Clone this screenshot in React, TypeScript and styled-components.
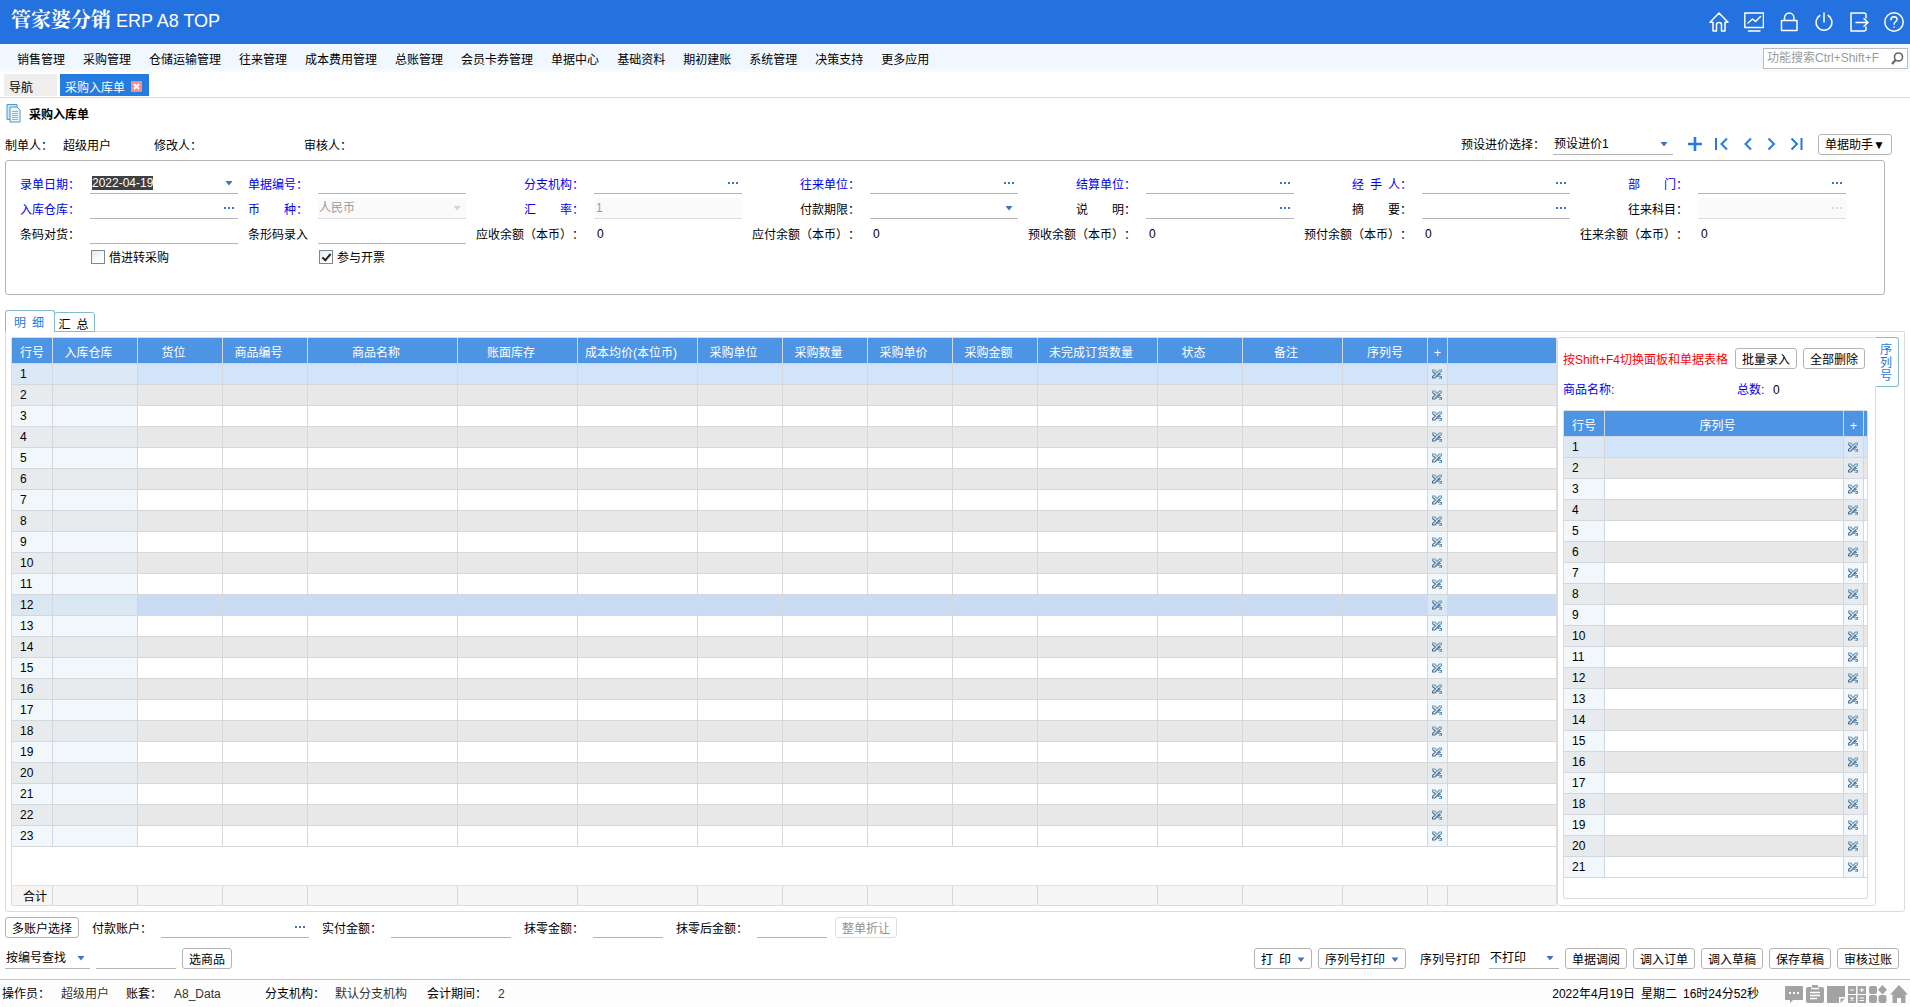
import React, { useEffect, useRef } from "react";
import styled, { createGlobalStyle, css } from "styled-components";

const GlobalStyle = createGlobalStyle`
  *, *::before, *::after { box-sizing: border-box; }
  body { margin: 0; background: #fff; text-spacing-trim: space-all; }
  body, button, input, select, table {
    font-family: "Liberation Sans", Arial, "Noto Sans CJK SC", sans-serif;
    font-size: 12px;
    line-height: 16px;
    color: #000;
  }
  button { cursor: pointer; }
  ::selection { background: #404040; color: #fff; }
`;

const Page = styled.div`
  min-height: 100vh;
  min-width: 1680px;
  display: flex;
  flex-direction: column;
`;

/* ---------- title bar and menu ---------- */

const TitleBar = styled.header`
  height: 44px;
  padding: 0 6px 0 11px;
  display: flex;
  align-items: center;
  justify-content: space-between;
  background: #2472e0;
  color: #fff;
`;

const Brand = styled.h1`
  margin: 0;
  padding-bottom: 4px;
  font-size: 18px;
  line-height: 28px;
  font-weight: 400;
`;

const BrandName = styled.span`
  font-family: "Noto Serif CJK SC", "Noto Sans CJK SC", sans-serif;
  font-size: 20px;
  font-weight: 700;
`;

const TitleActions = styled.div`
  display: flex;
  gap: 15px;
`;

const IconButton = styled.button<{ $size?: number }>`
  width: ${(p) => p.$size ?? 20}px;
  height: ${(p) => p.$size ?? 20}px;
  padding: 0;
  border: 0;
  background: none;
  display: flex;
  align-items: center;
  justify-content: center;
`;

const MenuBar = styled.nav`
  height: 28px;
  padding: 0 2px 0 17px;
  display: flex;
  justify-content: space-between;
  background: #f0f7ff;
  border-bottom: 3px solid #fafafa;
`;

const MenuItems = styled.div`
  display: flex;
  align-items: center;
  gap: 18px;
  padding-top: 6px;
`;

const MenuLink = styled.a`
  color: #000;
  text-decoration: none;
`;

const SearchBox = styled.label`
  width: 145px;
  height: 21px;
  margin-top: 4px;
  padding: 0 3px;
  display: flex;
  align-items: center;
  background: #fff;
  border: 1px solid #b9bcc0;
`;

const SearchInput = styled.input`
  flex: 1;
  min-width: 0;
  padding: 0 0 2px;
  border: 0;
  outline: 0;
  background: none;
  &::placeholder { color: #9b9b9b; opacity: 1; }
`;

/* ---------- window tabs ---------- */

const WindowTabs = styled.div`
  height: 26px;
  padding: 2px 0 1px 4px;
  display: flex;
  gap: 3px;
  border-bottom: 1px solid #dcdcdc;
`;

const WindowTab = styled.button<{ $active?: boolean }>`
  min-width: 53px;
  padding: 6px 7px 0 5px;
  display: flex;
  align-items: center;
  gap: 6px;
  border: 0;
  background: ${(p) => (p.$active ? "#247be0" : "#eeeeee")};
  color: ${(p) => (p.$active ? "#fff" : "#000")};
`;

const CloseMark = styled.svg`
  margin-bottom: 4px;
`;

const DocTitle = styled.div`
  height: 30px;
  padding-left: 6px;
  display: flex;
  align-items: center;
  gap: 8px;
`;

const DocHeading = styled.h2`
  margin: 0;
  padding-top: 4px;
  font-size: 12px;
  font-weight: 700;
`;

const InfoRow = styled.div`
  height: 32px;
  padding: 0 18px 0 5px;
  display: flex;
  align-items: center;
  justify-content: space-between;
`;

const InfoList = styled.div`
  display: flex;
  padding-top: 4px;
`;

const InfoLabel = styled.span<{ $width: number }>`
  width: ${(p) => p.$width}px;
`;

const InfoTools = styled.div`
  display: flex;
  align-items: center;
  gap: 8px;
`;

const NavButtons = styled.div`
  display: flex;
  align-items: center;
  gap: 5px;
  margin: 0 5px 0 4px;
`;

/* ---------- shared controls ---------- */

const PushButton = styled.button`
  height: 21px;
  padding: 2px 6px 0;
  display: flex;
  align-items: center;
  gap: 6px;
  flex: none;
  white-space: nowrap;
  border: 1px solid #b4b4b4;
  border-radius: 3px;
  background: #fff;
  &:disabled { color: #8f8f8f; border-color: #dddddd; }
`;

const FieldLabel = styled.label<{ $link?: boolean; $align?: string }>`
  padding-top: 2px;
  color: ${(p) => (p.$link ? "#0000f0" : "#000")};
  text-align: ${(p) => p.$align ?? "left"};
  white-space: nowrap;
  line-height: 20px;
`;

const FieldBox = styled.div<{ $width?: number; $disabled?: boolean }>`
  ${(p) => p.$width && css`width: ${p.$width}px;`}
  height: 21px;
  min-width: 0;
  padding-right: 3px;
  display: flex;
  align-items: center;
  border-bottom: 1px solid ${(p) => (p.$disabled ? "#dddddd" : "#b4b4b4")};
  background: ${(p) => (p.$disabled ? "#fafafa" : "#fff")};
`;

const controlStyle = css`
  flex: 1;
  width: 100%;
  min-width: 0;
  height: 18px;
  padding: 0 0 0 2px;
  border: 0;
  outline: 0;
  background: none;
  &:disabled { color: #9b9b9b; opacity: 1; }
`;

const TextInput = styled.input`${controlStyle}`;

const SelectInput = styled.select`
  ${controlStyle}
  appearance: none;
  padding-left: 1px;
  padding-right: 16px;
  margin-right: -14px;
`;

const Drop = styled.svg`
  flex: none;
  pointer-events: none;
`;

const Arrow = ({ faded = false }: { faded?: boolean }) => (
  <Drop width="14" height="8" viewBox="0 0 14 8" aria-hidden="true">
    <path d="M4.5 2h7L8 6.5z" fill={faded ? "#c9d6e6" : "#3f74bd"} />
  </Drop>
);

const ButtonArrow = () => (
  <Drop width="8" height="6" viewBox="0 0 8 6" aria-hidden="true">
    <path d="M0.5 0.5h7L4 5z" fill="#3f74bd" />
  </Drop>
);

const Dots = ({ faded = false }: { faded?: boolean }) => (
  <svg width="11" height="2" viewBox="0 0 11 2" aria-hidden="true">
    <path d="M0 0h2v2H0zM4 0h2v2H4zM8 0h2v2H8z" fill={faded ? "#d3deea" : "#3f74bd"} />
  </svg>
);

type FieldKind = "text" | "lookup" | "select";

const Field = ({
  id, kind = "text", value = "", width, disabled, label,
}: { id: string; kind?: FieldKind; value?: string; width?: number; disabled?: boolean; label?: string }) => (
  <FieldBox $width={width} $disabled={disabled}>
    {kind === "select" ? (
      <>
        <SelectInput id={id} disabled={disabled} aria-label={label}>
          <option>{value}</option>
        </SelectInput>
        <Arrow faded={disabled} />
      </>
    ) : (
      <TextInput id={id} defaultValue={value} disabled={disabled} aria-label={label} />
    )}
    {kind === "lookup" && (
      <IconButton type="button" $size={12} disabled={disabled} aria-label="选择">
        <Dots faded={disabled} />
      </IconButton>
    )}
  </FieldBox>
);

const DateField = ({ id, value }: { id: string; value: string }) => {
  const ref = useRef<HTMLInputElement>(null);
  useEffect(() => {
    ref.current?.focus();
    ref.current?.select();
  }, []);
  return (
    <FieldBox>
      <TextInput id={id} ref={ref} defaultValue={value} />
      <IconButton type="button" $size={14} aria-label="打开日历">
        <Arrow />
      </IconButton>
    </FieldBox>
  );
};

/* ---------- document form ---------- */

const FormPanel = styled.form`
  margin: 0 25px 0 5px;
  padding: 12px 38px 25px 14px;
  min-height: 135px;
  display: grid;
  grid-template-columns: 60px 1fr 60px 1fr repeat(5, 108px 1fr);
  grid-auto-rows: 21px;
  column-gap: 10px;
  row-gap: 4px;
  border: 1px solid #b4b4b4;
  border-radius: 3px;
`;

const Amount = styled.output`
  padding-left: 3px;
  line-height: 22px;
`;

const CheckLabel = styled.label<{ $column: number }>`
  grid-column: ${(p) => p.$column};
  height: 20px;
  display: flex;
  align-items: center;
  gap: 4px;
  white-space: nowrap;
`;

const CheckBox = styled.input`
  appearance: none;
  width: 14px;
  height: 14px;
  margin: 0 0 2px 1px;
  border: 1px solid #7c8794;
  background: linear-gradient(135deg, #dfe8f2, #fff 70%);
  display: grid;
  place-items: center;
  &:checked::after {
    content: "";
    width: 5px;
    height: 9px;
    margin-bottom: 2px;
    border: solid #222;
    border-width: 0 2px 2px 0;
    transform: rotate(40deg);
  }
`;

/* ---------- detail area ---------- */

const DetailTabs = styled.div`
  margin: 15px 0 -1px 5px;
  height: 22px;
  display: flex;
  align-items: flex-end;
  position: relative;
`;

const DetailTab = styled.button<{ $active?: boolean }>`
  width: ${(p) => (p.$active ? 50 : 41)}px;
  height: ${(p) => (p.$active ? 22 : 20)}px;
  margin-right: -1px;
  padding: 4px 2px 0 0;
  border: 1px solid #86bcd3;
  border-bottom-color: ${(p) => (p.$active ? "#fff" : "#86bcd3")};
  border-radius: 3px 3px 0 0;
  background: #fff;
  color: ${(p) => (p.$active ? "#1e78dc" : "#000")};
`;

const DetailFrame = styled.main`
  flex: 1;
  margin: 0 5px;
  padding: 5px;
  display: flex;
  border: 1px solid #dcdcdc;
  border-radius: 0 0 3px 3px;
`;

const GridBox = styled.section`
  flex: 1;
  min-width: 0;
  display: flex;
  flex-direction: column;
  justify-content: space-between;
  border: 1px solid #dcdcdc;
  border-radius: 2px;
`;

const SidePanel = styled.section`
  width: 319px;
  padding: 0 7px 6px 5px;
  display: flex;
  flex-direction: column;
  border: 1px solid #dcdcdc;
  border-radius: 3px;
`;

const SideActions = styled.div`
  height: 21px;
  margin: 10px 3px 0 0;
  display: flex;
  align-items: center;
  gap: 6px;
`;

const Hint = styled.span`
  flex: 1;
  padding-top: 2px;
  white-space: nowrap;
  color: #f00;
`;

const SideSummary = styled.div`
  height: 41px;
  padding-top: 1px;
  display: grid;
  grid-template-columns: 174px 36px 1fr;
  align-items: center;
  color: #0000f0;
`;

const Count = styled.output`
  color: #000;
`;

const SideTab = styled.button`
  width: 24px;
  height: 50px;
  margin-left: -1px;
  padding: 3px 0 0;
  border: 1px solid #86bcd3;
  border-left-color: #fff;
  border-radius: 0 3px 3px 0;
  background: #fff;
  color: #1e78dc;
  line-height: 13px;
`;

const SideTabText = styled.span`
  display: block;
  width: 12px;
  margin-left: 4px;
`;

const Table = styled.table`
  width: 100%;
  table-layout: fixed;
  border-collapse: separate;
  border-spacing: 0;
`;

const HeadCell = styled.th<{ $sortable?: boolean }>`
  height: 26px;
  padding: 4px ${(p) => (p.$sortable ? 13 : 0)}px 0 0;
  font-weight: 400;
  white-space: nowrap;
  color: #fff;
  background: #4d95e4;
  border-right: 1px solid #d4d8dc;
  border-bottom: 1px solid #d4d8dc;
  &:last-child { border-right: 0; }
`;

type Tone = "current" | "hover" | "even" | "odd";
const cellColor: Record<Tone, string> = { current: "#d1e4fa", hover: "#c9dcf4", even: "#e8e8e8", odd: "#ffffff" };
const fixedColor: Record<Tone, string> = { current: "#dde8f6", hover: "#d9e7f3", even: "#e7ebee", odd: "#f2f7fb" };

const Row = styled.tr<{ $tone: Tone }>`
  height: 21px;
  background: ${(p) => cellColor[p.$tone]};
`;

const Cell = styled.td<{ $fixed?: Tone }>`
  height: 21px;
  padding: 0;
  border-right: 1px solid #d4d8dc;
  border-bottom: 1px solid #d4d8dc;
  ${(p) => p.$fixed && css`background: ${fixedColor[p.$fixed]};`}
  &:last-child { border-right: 0; }
`;

const NumberCell = styled(Cell)`
  padding-left: 8px;
`;

const IconCell = styled(Cell)`
  padding-right: 1px;
  line-height: 0;
  text-align: center;
`;

const RowAction = styled(IconButton)`
  display: inline-flex;
  vertical-align: top;
`;

const FootCell = styled.td`
  height: 20px;
  padding: 2px 5px 0 0;
  text-align: right;
  background: #f6f5f4;
  border-top: 1px solid #d8e6f3;
  border-right: 1px solid #d4d8dc;
  &:last-child { border-right: 0; }
`;

const SideGrid = styled.div`
  flex: 1;
  border: 1px solid #dcdcdc;
  border-radius: 2px;
`;

const ClearIcon = () => (
  <svg width="10" height="10" viewBox="0 0 10 10" fill="none" aria-hidden="true">
    <path d="M0.5 2.5V1H3l2 2.5L7.5 1h2v1.5l-3 2.5" stroke="#6f9cbc" strokeWidth="1.2" />
    <path d="M0.5 2.5l3 2.5-3 2.5V9H3l4.5-5" stroke="#44709a" strokeWidth="1.2" />
    <path d="M5.5 7.5H7v-2h2M7 9.3h2.5V7.5H8" stroke="#5c88ab" strokeWidth="1.1" />
  </svg>
);

type Column = { name: string; width?: number; sortable?: boolean };

const columns: Column[] = [
  { name: "行号", width: 41 },
  { name: "入库仓库", width: 85, sortable: true },
  { name: "货位", width: 85, sortable: true },
  { name: "商品编号", width: 85, sortable: true },
  { name: "商品名称", width: 150, sortable: true },
  { name: "账面库存", width: 120, sortable: true },
  { name: "成本均价(本位币)", width: 120, sortable: true },
  { name: "采购单位", width: 85, sortable: true },
  { name: "采购数量", width: 85, sortable: true },
  { name: "采购单价", width: 85, sortable: true },
  { name: "采购金额", width: 85, sortable: true },
  { name: "未完成订货数量", width: 120, sortable: true },
  { name: "状态", width: 85, sortable: true },
  { name: "备注", width: 100, sortable: true },
  { name: "序列号", width: 85 },
  { name: "+", width: 20 },
  { name: "" },
];

const sideColumns: Column[] = [
  { name: "行号", width: 41 },
  { name: "序列号", sortable: true },
  { name: "+", width: 20 },
  { name: "", width: 3 },
];

const Columns = ({ list }: { list: Column[] }) => (
  <colgroup>
    {list.map((c, i) => <col key={i} width={c.width} />)}
  </colgroup>
);

const DataGrid = ({
  list, rows, frozen, hovered,
}: { list: Column[]; rows: number; frozen: number; hovered?: number }) => (
  <Table>
    <Columns list={list} />
    <thead>
      <tr>
        {list.map((c, i) => (
          <HeadCell key={i} scope="col" $sortable={c.sortable}>{c.name}</HeadCell>
        ))}
      </tr>
    </thead>
    <tbody>
      {Array.from({ length: rows }, (_, r) => r + 1).map((n) => {
        const tone: Tone = n === 1 ? "current" : n === hovered ? "hover" : n % 2 ? "odd" : "even";
        return (
          <Row key={n} $tone={tone}>
            {list.map(({ name }, i) => {
              if (i === 0) return <NumberCell key={i} $fixed={tone}>{n}</NumberCell>;
              if (name === "+")
                return (
                  <IconCell key={i} $fixed={tone}>
                    <RowAction type="button" $size={12} aria-label={`删除第${n}行`}><ClearIcon /></RowAction>
                  </IconCell>
                );
              return <Cell key={i} $fixed={i < frozen ? tone : undefined} />;
            })}
          </Row>
        );
      })}
    </tbody>
  </Table>
);

/* ---------- bottom bars ---------- */

const BottomBar = styled.div`
  padding: 5px 11px 10px 5px;
  display: grid;
  row-gap: 10px;
`;

const BarRow = styled.div`
  height: 21px;
  display: flex;
  align-items: center;
  gap: 6px;
`;

const PayRow = styled(BarRow)`
  gap: 8px;
`;

const PayLabel = styled(FieldLabel)`
  padding: 2px 1px 0 5px;
`;

const Spacer = styled.span`
  flex: 1;
`;

const PrintLabel = styled(FieldLabel)`
  padding: 2px 3px 0 8px;
`;

const StatusBar = styled.footer`
  height: 28px;
  padding: 0 2px;
  display: flex;
  align-items: center;
  justify-content: space-between;
  border-top: 1px solid #b9c4c6;
  background: #fdfdfd;
  white-space: nowrap;
`;

const StatusText = styled.span<{ $width: number; $muted?: boolean }>`
  width: ${(p) => p.$width}px;
  color: ${(p) => (p.$muted ? "#333" : "#000")};
`;

const Clock = styled.time`
  margin-right: 26px;
`;

const StatusGroup = styled.div`
  display: flex;
  align-items: center;
`;

const StatusIcons = styled.div`
  display: flex;
  gap: 3px;
`;

/* ---------- icons ---------- */

const LineIcon = ({ children }: { children: React.ReactNode }) => (
  <svg width="20" height="20" viewBox="0 0 20 20" fill="none" stroke="#fff" strokeWidth="1.5" strokeLinejoin="round" strokeLinecap="round" aria-hidden="true">
    {children}
  </svg>
);

const SolidIcon = ({ children }: { children: React.ReactNode }) => (
  <svg width="18" height="18" viewBox="0 0 18 18" fill="#a3a3a3" aria-hidden="true">{children}</svg>
);

const titleIcons: [string, React.ReactNode][] = [
  ["首页", <path d="M10 1L1 10.2h3V19h3.5v-6.5c0-1.3 1-2 2.5-2s2.5.7 2.5 2V19H16v-8.8h3z" />],
  ["报表", <><path d="M.8 1h18.7v14.5H.8zM4.5 19H16" /><path d="M4 11l4.500-4 3 2.500 5-5" /></>],
  ["锁定", <><path d="M2.500 8.500h15.500V18.500H2.500z" /><path d="M5.500 8.500V5.800a4.700 4.700 0 0 1 9.400 0v2.700" /></>],
  ["注销", <><path d="M10 1v9" /><path d="M5.800 3.500a8 8 0 1 0 8.400 0" /></>],
  ["退出", <><path d="M17 6V3a2 2 0 0 0-2-2H2v18h13a2 2 0 0 0 2-2v-2" /><path d="M7 10.500h11.500M15 6.800l4 3.700-4 3.700" /></>],
  ["帮助", <><circle cx="10" cy="10" r="9.2" /><path d="M7 7.800c0-2 1.300-3 3-3s3 1 3 2.700c0 2.200-3 2.300-3 4.700M10 15v.3" /></>],
];

const statusIcons: [string, React.ReactNode][] = [
  ["消息", <><path d="M1 1h16a1 1 0 0 1 1 1v12a1 1 0 0 1-1 1H8l-3 3v-3H1a1 1 0 0 1-1-1V2a1 1 0 0 1 1-1z" /><path d="M4 7h2v2H4zM8 7h2v2H8zM12 7h2v2h-2z" fill="#fff" /></>],
  ["待办", <><path d="M2 2h4V0h6v2h4a2 2 0 0 1 2 2v12a2 2 0 0 1-2 2H2a2 2 0 0 1-2-2V4a2 2 0 0 1 2-2z" /><path d="M5 3.500h8M4 7.500h10M4 10.500h10M4 13.500h7" stroke="#fff" strokeWidth="1.3" /></>],
  ["便签", <><path d="M0 1h18v11h-6v6H0z" /><path d="M13.500 13.500H18L13.500 18z" /></>],
  ["计算器", <><path d="M0 1h8v8H0zM9.500 1H18v8H9.500zM0 10h8v8H0zM9.500 10H18v8H9.500z" /><path d="M2 5h4M11.500 5h4.500M13.800 3v4M2.500 12.500l3 3M5.500 12.500l-3 3M11.500 13h4.500M11.500 15.500h4.500" stroke="#fff" strokeWidth="1.2" /></>],
  ["应用", <><rect x="0" y="1" width="8" height="8" rx="2" /><path d="M13.500 0L18 4.800 13.500 9.600 9 4.800z" /><rect x="0" y="10" width="8" height="8" rx="2" /><rect x="9.5" y="10" width="8" height="8" rx="2" /></>],
  ["主页", <path d="M9 0l9 9.500h-2.500V18H11v-5H7v5H2.500V9.500H0z" />],
];

const navIcons: [string, string][] = [
  ["第一张", "M4 2v12M15 2.500L9.500 8l5.500 5.500"],
  ["上一张", "M14 2.500L8.500 8l5.500 5.500"],
  ["下一张", "M6.500 2.500L12 8l-5.500 5.500"],
  ["最后一张", "M14.500 2v12M4.500 2.500L10 8l-5.500 5.500"],
];

const menus = [
  "销售管理", "采购管理", "仓储运输管理", "往来管理", "成本费用管理", "总账管理", "会员卡券管理",
  "单据中心", "基础资料", "期初建账", "系统管理", "决策支持", "更多应用",
];

type FormItem = { label: string; link?: boolean; kind?: FieldKind | "date" | "amount"; value?: string; disabled?: boolean };

const formRows: FormItem[][] = [
  [
    { label: "录单日期：", link: true, kind: "date", value: "2022-04-19" },
    { label: "单据编号：", link: true },
    { label: "分支机构：", link: true, kind: "lookup" },
    { label: "往来单位：", link: true, kind: "lookup" },
    { label: "结算单位：", link: true, kind: "lookup" },
    { label: "经\u2002手\u2002人：", link: true, kind: "lookup" },
    { label: "部　　门：", link: true, kind: "lookup" },
  ],
  [
    { label: "入库仓库：", link: true, kind: "lookup" },
    { label: "币　　种：", link: true, kind: "select", value: "人民币", disabled: true },
    { label: "汇　　率：", link: true, value: "1", disabled: true },
    { label: "付款期限：", kind: "select" },
    { label: "说　　明：", kind: "lookup" },
    { label: "摘　　要：", kind: "lookup" },
    { label: "往来科目：", kind: "lookup", disabled: true },
  ],
  [
    { label: "条码对货：" },
    { label: "条形码录入" },
    { label: "应收余额（本币）：", kind: "amount" },
    { label: "应付余额（本币）：", kind: "amount" },
    { label: "预收余额（本币）：", kind: "amount" },
    { label: "预付余额（本币）：", kind: "amount" },
    { label: "往来余额（本币）：", kind: "amount" },
  ],
];

const FormField = ({ item, id, column }: { item: FormItem; id: string; column: number }) => (
  <>
    <FieldLabel htmlFor={id} $link={item.link} $align={column > 1 ? "right" : "left"}>{item.label}</FieldLabel>
    {item.kind === "amount" ? (
      <Amount id={id}>0</Amount>
    ) : item.kind === "date" ? (
      <DateField id={id} value={item.value ?? ""} />
    ) : (
      <Field id={id} kind={item.kind} value={item.value} disabled={item.disabled} />
    )}
  </>
);

export default function App() {
  return (
    <Page lang="zh-CN">
      <GlobalStyle />
      <TitleBar>
        <Brand><BrandName>管家婆分销</BrandName> ERP A8 TOP</Brand>
        <TitleActions>
          {titleIcons.map(([name, shape]) => (
            <IconButton key={name} type="button" aria-label={name}><LineIcon>{shape}</LineIcon></IconButton>
          ))}
        </TitleActions>
      </TitleBar>

      <MenuBar>
        <MenuItems>
          {menus.map((m) => <MenuLink key={m} href="#">{m}</MenuLink>)}
        </MenuItems>
        <SearchBox>
          <SearchInput placeholder="功能搜索Ctrl+Shift+F" aria-label="功能搜索" />
          <svg width="13" height="13" viewBox="0 0 13 13" fill="none" stroke="#666" aria-hidden="true">
            <circle cx="7.5" cy="5" r="4" strokeWidth="1.6" />
            <path d="M4.5 8L1 12" strokeWidth="2.2" />
          </svg>
        </SearchBox>
      </MenuBar>

      <WindowTabs>
        <WindowTab type="button">导航</WindowTab>
        <WindowTab type="button" $active>
          采购入库单
          <CloseMark width="11" height="11" viewBox="0 0 11 11" aria-hidden="true">
            <rect width="11" height="11" rx="1" fill="#f08f8c" />
            <path d="M3 3l5 5M8 3L3 8" stroke="#fff" strokeWidth="2" />
          </CloseMark>
        </WindowTab>
      </WindowTabs>

      <DocTitle>
        <svg width="15" height="19" viewBox="0 0 15 19" aria-hidden="true">
          <path d="M1 .5h10v15H1z" fill="#cfe6f5" stroke="#4f9ac6" />
          <path d="M4 3h7l3 3v12H4z" fill="#eaf5fc" stroke="#4f9ac6" />
          <path d="M6 7.5h6M6 9.500h6M6 11.500h6M6 13.500h6M6 15.500h6" stroke="#7db9dd" />
        </svg>
        <DocHeading>采购入库单</DocHeading>
      </DocTitle>

      <InfoRow>
        <InfoList>
          <InfoLabel $width={58}>制单人：</InfoLabel>
          <InfoLabel $width={91}>超级用户</InfoLabel>
          <InfoLabel $width={150}>修改人：</InfoLabel>
          <InfoLabel $width={60}>审核人：</InfoLabel>
        </InfoList>
        <InfoTools>
          <FieldLabel htmlFor="preset">预设进价选择：</FieldLabel>
          <Field id="preset" kind="select" value="预设进价1" width={120} />
          <NavButtons>
            <IconButton type="button" aria-label="新增">
              <svg width="14" height="14" viewBox="0 0 14 14" aria-hidden="true">
                <path d="M7 0v14M0 7h14" stroke="#247be0" strokeWidth="2.6" />
              </svg>
            </IconButton>
            {navIcons.map(([name, d]) => (
              <IconButton key={name} type="button" aria-label={name}>
                <svg width="16" height="16" viewBox="0 0 16 16" fill="none" stroke="#247be0" strokeWidth="2" aria-hidden="true">
                  <path d={d} />
                </svg>
              </IconButton>
            ))}
          </NavButtons>
          <PushButton type="button">单据助手▼</PushButton>
        </InfoTools>
      </InfoRow>

      <FormPanel>
        {formRows.map((row, r) =>
          row.map((item, c) => <FormField key={`${r}-${c}`} id={`f-${r}-${c}`} item={item} column={c} />)
        )}
        <CheckLabel $column={2}><CheckBox type="checkbox" />借进转采购</CheckLabel>
        <CheckLabel $column={4}><CheckBox type="checkbox" defaultChecked />参与开票</CheckLabel>
      </FormPanel>

      <DetailTabs role="tablist">
        <DetailTab type="button" role="tab" aria-selected="true" $active>明&ensp;细</DetailTab>
        <DetailTab type="button" role="tab" aria-selected="false">汇&ensp;总</DetailTab>
      </DetailTabs>

      <DetailFrame>
        <GridBox>
          <DataGrid list={columns} rows={23} frozen={2} hovered={12} />
          <Table>
            <Columns list={columns} />
            <tbody>
              <tr>{columns.map((_, i) => <FootCell key={i}>{i === 0 ? "合计" : ""}</FootCell>)}</tr>
            </tbody>
          </Table>
        </GridBox>
        <SidePanel>
          <SideActions>
            <Hint>按Shift+F4切换面板和单据表格</Hint>
            <PushButton type="button">批量录入</PushButton>
            <PushButton type="button">全部删除</PushButton>
          </SideActions>
          <SideSummary>
            <span>商品名称:</span>
            <span>总数:</span>
            <Count>0</Count>
          </SideSummary>
          <SideGrid>
            <DataGrid list={sideColumns} rows={21} frozen={1} />
          </SideGrid>
        </SidePanel>
        <SideTab type="button"><SideTabText>序列号</SideTabText></SideTab>
      </DetailFrame>

      <BottomBar>
        <PayRow>
          <PushButton type="button">多账户选择</PushButton>
          <PayLabel htmlFor="account">付款账户：</PayLabel>
          <Field id="account" kind="lookup" width={148} />
          <PayLabel htmlFor="paid">实付金额：</PayLabel>
          <Field id="paid" width={120} />
          <PayLabel htmlFor="round">抹零金额：</PayLabel>
          <Field id="round" width={70} />
          <PayLabel htmlFor="rounded">抹零后金额：</PayLabel>
          <Field id="rounded" width={70} />
          <PushButton type="button" disabled>整单折让</PushButton>
        </PayRow>
        <BarRow>
          <Field id="findby" kind="select" value="按编号查找" width={85} label="查找方式" />
          <Field id="find" width={80} label="查找内容" />
          <PushButton type="button">选商品</PushButton>
          <Spacer />
          <PushButton type="button">打&ensp;印<ButtonArrow /></PushButton>
          <PushButton type="button">序列号打印<ButtonArrow /></PushButton>
          <PrintLabel htmlFor="printmode">序列号打印</PrintLabel>
          <Field id="printmode" kind="select" value="不打印" width={70} />
          <PushButton type="button">单据调阅</PushButton>
          <PushButton type="button">调入订单</PushButton>
          <PushButton type="button">调入草稿</PushButton>
          <PushButton type="button">保存草稿</PushButton>
          <PushButton type="button">审核过账</PushButton>
        </BarRow>
      </BottomBar>

      <StatusBar>
        <StatusGroup>
          <StatusText $width={59}>操作员：</StatusText>
          <StatusText $width={65} $muted>超级用户</StatusText>
          <StatusText $width={48}>账套：</StatusText>
          <StatusText $width={91} $muted>A8_Data</StatusText>
          <StatusText $width={70}>分支机构：</StatusText>
          <StatusText $width={92} $muted>默认分支机构</StatusText>
          <StatusText $width={71}>会计期间：</StatusText>
          <StatusText $width={20} $muted>2</StatusText>
        </StatusGroup>
        <StatusGroup>
          <Clock dateTime="2022-04-19T16:24:52">2022年4月19日&ensp;星期二&ensp;16时24分52秒</Clock>
          <StatusIcons>
            {statusIcons.map(([name, shape]) => (
              <IconButton key={name} type="button" aria-label={name} $size={18}><SolidIcon>{shape}</SolidIcon></IconButton>
            ))}
          </StatusIcons>
        </StatusGroup>
      </StatusBar>
    </Page>
  );
}
